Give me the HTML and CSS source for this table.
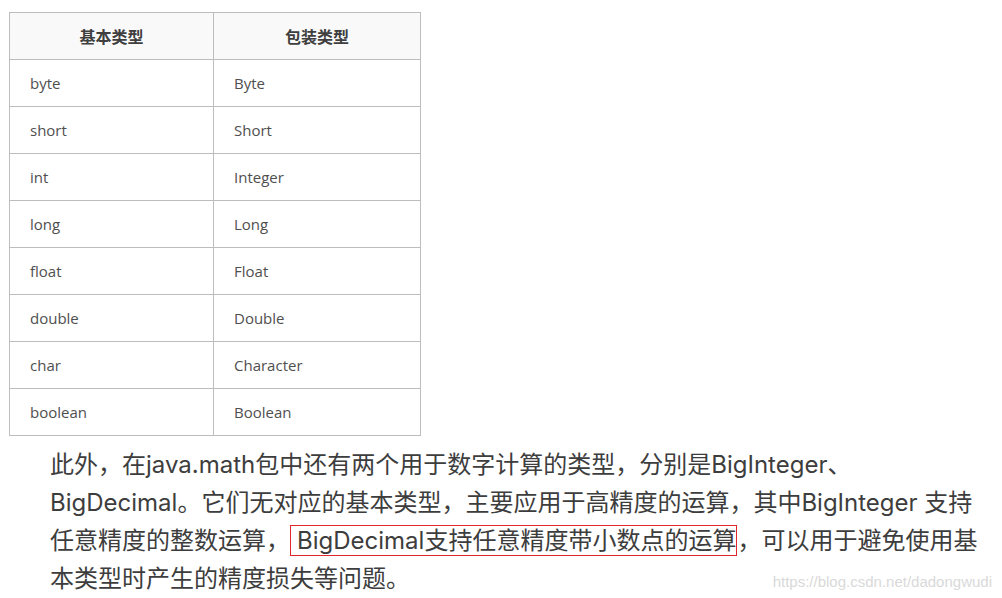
FILE: index.html
```html
<!DOCTYPE html>
<html lang="zh-CN">
<head>
    <meta charset="UTF-8">
    <meta name="viewport" content="width=device-width, initial-scale=1.0">
    <title>基本类型与包装类型</title>
    <link rel="stylesheet" href="styles.css">
</head>
<body>
    <div class="page">
        <table class="types">
            <thead>
                <tr><th>基本类型</th><th>包装类型</th></tr>
            </thead>
            <tbody>
                <tr><td>byte</td><td>Byte</td></tr>
                <tr><td>short</td><td>Short</td></tr>
                <tr><td>int</td><td>Integer</td></tr>
                <tr><td>long</td><td>Long</td></tr>
                <tr><td>float</td><td>Float</td></tr>
                <tr><td>double</td><td>Double</td></tr>
                <tr><td>char</td><td>Character</td></tr>
                <tr><td>boolean</td><td>Boolean</td></tr>
            </tbody>
        </table>
        <p class="note">此外，在java.math包中还有两个用于数字计算的类型，分别是BigInteger、BigDecimal。它们无对应的基本类型，主要应用于高精度的运算，其中BigInteger 支持任意精度的整数运算，<span class="mark">BigDecimal支持任意精度带小数点的运算</span>，可以用于避免使用基本类型时产生的精度损失等问题。</p>
        <div class="watermark">https://blog.csdn.net/dadongwudi</div>
    </div>
</body>
</html>
```

FILE: styles.css
```css
body {
    margin: 0;
    background-color: #fff;
    font-family: "Open Sans", "Noto Sans CJK SC", sans-serif;
    color: #4f4f4f;
}
.page {
    position: relative;
    width: 1002px;
    height: 598px;
    overflow: hidden;
    padding-top: 12px;
    box-sizing: border-box;
}
.types {
    margin-left: 9px;
    border-collapse: collapse;
    width: 412px;
    font-size: 15px;
}
.types th,
.types td {
    border: 1px solid #bdbdbd;
    height: 47px;
    padding: 0 20px;
    box-sizing: border-box;
}
.types th {
    background-color: #f9f9f9;
    font-weight: bold;
    font-size: 16px;
    color: #3f3f3f;
    text-align: center;
}
.types td {
    text-align: left;
}
.types th:first-child,
.types td:first-child {
    width: 204px;
}
.note {
    margin: 10px 0 0 50px;
    width: 938px;
    font-family: Inter, "Noto Sans CJK SC", sans-serif;
    font-size: 24px;
    line-height: 38px;
    color: #3d3d3d;
}
.mark {
    border: 1px solid #e3262b;
    padding: 0 0 0 6px;
}
.watermark {
    position: absolute;
    right: 10px;
    bottom: 8px;
    font-family: "Liberation Sans", Arial, sans-serif;
    font-size: 15px;
    color: #d9d9d9;
}
```
